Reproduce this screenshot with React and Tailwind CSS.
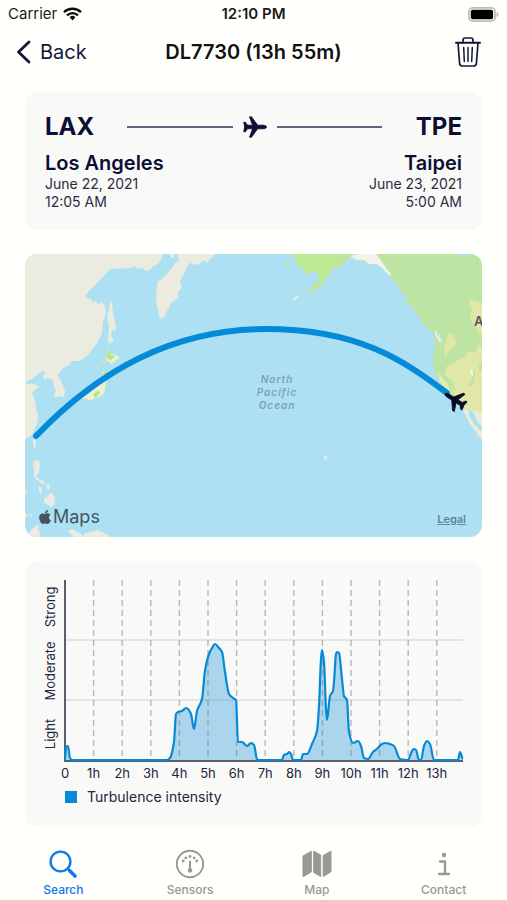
import React, { useState } from "react";
import { FaApple } from "react-icons/fa";

const airports = {
  from: { code: "LAX", city: "Los Angeles", date: "June 22, 2021", time: "12:05 AM" },
  to: { code: "TPE", city: "Taipei", date: "June 23, 2021", time: "5:00 AM" },
};

// [offset, intensity] samples, 398 wide by 180 high
const samples = [
  [0, 0], [1, 13], [3, 14], [5, 2], [7, 0], [102, 0], [105, 2], [109, 18], [111, 46], [113, 48],
  [117, 49], [121, 52], [123, 51], [126, 46], [129, 31], [132, 49], [137, 61], [140, 89], [144, 106], [147, 112],
  [150, 116], [154, 112], [157, 108], [160, 88], [164, 66], [168, 62], [171, 60], [173, 18], [177, 18], [182, 14],
  [186, 17], [189, 15], [192, 1], [194, 0], [217, 0], [219, 5], [222, 6], [224, 8], [226, 6], [228, 0],
  [236, 0], [238, 6], [242, 6], [247, 16], [252, 29], [254, 54], [256, 101], [257, 110], [259, 98], [261, 51],
  [262, 40], [265, 64], [268, 69], [269, 78], [271, 106], [272, 108], [274, 107], [277, 81], [279, 64], [282, 60],
  [284, 28], [288, 17], [293, 19], [296, 14], [299, 2], [303, 1], [308, 8], [312, 11], [317, 16], [320, 17],
  [325, 16], [329, 14], [335, 1], [343, 0], [347, 9], [349, 11], [351, 10], [354, 0], [356, 0], [359, 14],
  [362, 19], [365, 16], [369, 0], [393, 0], [395, 8], [398, 1],
];

const hours = ["0", "1h", "2h", "3h", "4h", "5h", "6h", "7h", "8h", "9h", "10h", "11h", "12h", "13h"];
const HOUR = 28.6;
const LEFT = 40;
const BASE = 199;

// Monotone cubic through the samples
const buildLine = (points) => {
  const pts = points.map(([x, v]) => [LEFT + x, BASE - v]);
  const slope = pts.slice(1).map(([x, y], i) => (y - pts[i][1]) / (x - pts[i][0]));
  const tangent = pts.map((_, i) => {
    const a = slope[i - 1];
    const b = slope[i];
    if (a === undefined || b === undefined || a * b <= 0) return 0;
    return (2 * a * b) / (a + b);
  });
  return pts.reduce((d, [x, y], i) => {
    if (i === 0) return `M${x},${y}`;
    const [px, py] = pts[i - 1];
    const h = (x - px) / 3;
    return `${d}C${px + h},${py + tangent[i - 1] * h} ${x - h},${y - tangent[i] * h} ${x},${y}`;
  }, "");
};

const line = buildLine(samples);

const WifiIcon = () => (
  <svg width="19" height="14" viewBox="0 0 19 14" fill="none" stroke="#0b0b0b" strokeWidth="2.3" aria-hidden="true">
    <path d="M1 5.2C5.8.6 13.2.6 18 5.2" />
    <path d="M4 8.4c3.2-3 7.8-3 11 0" />
    <path d="M6.600 10.3a4.1 4.1 0 0 1 5.8 0L9.500 13.4Z" fill="#0b0b0b" stroke="none" />
  </svg>
);

const BatteryIcon = () => (
  <svg width="31" height="15" viewBox="0 0 31 15" aria-hidden="true">
    <rect x=".9" y=".9" width="26.2" height="13.2" rx="4" fill="#fffffb" stroke="#bdbdb9" strokeWidth="1.8" />
    <rect x="2.8" y="2.8" width="22.3" height="9.4" rx="2" fill="#000" />
    <path d="M28.5 5c2.3.8 2.3 4.2 0 5Z" fill="#b5b5b1" />
  </svg>
);

const PlaneIcon = (props) => (
  <svg width="24" height="22" viewBox="0 0 24 22" fill="currentColor" stroke="currentColor" strokeWidth=".8" strokeLinejoin="round" aria-hidden="true" {...props}>
    <path d="M23.500 11C23.500 12 22 12.800 20 12.800H14.700L8.500 21.200H6.500L9.600 12.800H4.600L2.400 15.800H.7L1.600 11 .7 6.200H2.400L4.600 9.200H9.600L6.500.8H8.500L14.700 9.200H20C22 9.200 23.500 10 23.500 11Z" />
  </svg>
);

const TrashIcon = () => (
  <svg width="26" height="30" viewBox="0 0 26 30" fill="none" stroke="#14163d" strokeWidth="1.7" strokeLinecap="round" strokeLinejoin="round" aria-hidden="true">
    <path d="M1 5.8h24" strokeWidth="2" />
    <path d="M8 5.5V3.2Q8 1 10.2 1h5.6Q18 1 18 3.2v2.3" />
    <path d="M3 6l1.6 20.3Q4.9 29 7.5 29h11q2.6 0 2.9-2.7L23 6" />
    <path d="M8.7 10.5l.6 14M13 10.5v14M17.3 10.5l-.6 14" strokeWidth="1.5" />
  </svg>
);

const SearchIcon = () => (
  <svg width="28" height="28" viewBox="0 0 28 28" fill="none" stroke="currentColor" strokeLinecap="round" aria-hidden="true">
    <circle cx="11.5" cy="11.5" r="9.9" strokeWidth="2.4" />
    <path d="M19 19l1.5 1.5" strokeWidth="2.5" />
    <path d="M21 21l5 5" strokeWidth="3.6" />
  </svg>
);

const SensorsIcon = () => (
  <svg width="30" height="30" viewBox="0 0 30 30" fill="currentColor" aria-hidden="true">
    <circle cx="15" cy="15" r="13.2" fill="none" stroke="currentColor" strokeWidth="1.9" />
    <circle cx="8.2" cy="12" r="1.4" />
    <circle cx="10.8" cy="8.9" r="1.4" />
    <circle cx="15" cy="7.5" r="1.4" />
    <circle cx="19.2" cy="8.9" r="1.4" />
    <circle cx="21.8" cy="12" r="1.4" />
    <path d="M14 12.5a1 1 0 0 1 2 0v6.8a2.3 2.3 0 1 1-2 0Z" />
  </svg>
);

const MapIcon = () => (
  <svg width="30" height="28" viewBox="0 0 30 28" fill="currentColor" stroke="currentColor" strokeWidth="1" strokeLinejoin="round" aria-hidden="true">
    <path d="M1 6l8.3-4.8v20.8L1 26.8Z" />
    <path d="M11.7 1.2L18.7 5v21.5l-7-4Z" />
    <path d="M21.2 5.5L29 1.2v20.6l-7.8 4.7Z" />
  </svg>
);

const ContactIcon = () => (
  <svg width="14" height="24" viewBox="0 0 14 24" fill="none" stroke="currentColor" strokeWidth="2.3" strokeLinecap="round" strokeLinejoin="round" aria-hidden="true">
    <circle cx="7" cy="3" r="2.2" fill="currentColor" stroke="none" />
    <path d="M3 9.5h5v12.2M2 22h10" />
  </svg>
);

const tabs = [
  { name: "Search", icon: <SearchIcon /> },
  { name: "Sensors", icon: <SensorsIcon /> },
  { name: "Map", icon: <MapIcon /> },
  { name: "Contact", icon: <ContactIcon /> },
];

const StatusBar = () => (
  <div className="grid h-7 grid-cols-3 items-center px-2 text-[15px] leading-5 text-[#1c1c1c]">
    <div className="flex items-center gap-1.5">
      <span>Carrier</span>
      <WifiIcon />
    </div>
    <span className="text-center font-semibold">12:10 PM</span>
    <div className="flex justify-end">
      <BatteryIcon />
    </div>
  </div>
);

const Airport = ({ airport, end }) => (
  <div className={end ? "text-right" : "text-left"}>
    <h3 className="text-xl leading-6 font-semibold">{airport.city}</h3>
    <p className="text-sm leading-[18px] text-[#2b2c42]">{airport.date}</p>
    <p className="text-sm leading-[18px] text-[#2b2c42]">{airport.time}</p>
  </div>
);

const FlightCard = () => (
  <section className="rounded-xl bg-[#f9faf7] px-5 py-[19px] text-[#0c0e33]">
    <div className="flex items-center justify-between">
      <h2 className="w-[82px] text-2xl leading-8 font-bold">{airports.from.code}</h2>
      <div className="flex flex-1 items-center gap-2.5">
        <span className="h-0.5 flex-1 bg-[#62647e]" />
        <PlaneIcon />
        <span className="h-0.5 flex-1 bg-[#62647e]" />
      </div>
      <h2 className="w-20 text-right text-2xl leading-8 font-bold">{airports.to.code}</h2>
    </div>
    <div className="mt-2 flex justify-between">
      <Airport airport={airports.from} />
      <Airport airport={airports.to} end />
    </div>
  </section>
);

const RouteMap = () => (
  <section className="relative overflow-hidden rounded-xl bg-[#ade0f3]">
    <svg viewBox="25 254 457 283" className="block w-full" role="img" aria-label="Flight route from Los Angeles to Taipei">
      {/* Asia */}
      <g fill="#ebecdf">
        <path d="M25 254H163L161 259 157 265 153 266 150 270 146 271 142 268 138 269 135 266 130 268 110 269 100 280 91 289 85 296 87 298 91 299 92 303 96 301 98 304 102 302 105 306 106 313 103 322 102 333 97 343 88 355 80 361 72 361 68 366 63 368 58 375 60 379 62 383 65 391 64 397 59 396 55 398 54 394 56 391 54 387 53 380 47 378 44 380 43 376 46 373 43 371 37 375 32 379 27 381 26 384 34 384 40 387 36 389 32 393 35 400 36 408 38 415 37 423 32 435 25 439Z" />
        <path d="M170 254h5l-2 4h-2Z" />
        <path d="M180 254H215L210 259 207 263 203 260 198 265 190 263 187 267 184 274 182 277 180 282 182 288 178 292 178 298 172 302 168 309 165 315 162 319 159 317 158 310 156 300 157 286 158 282 164 277 170 270 176 262 180 260 177 256Z" />
        <path d="M110 300L112 304 113 313 116 328 115 331 112 330 111 336 114 341 110 344 108 341 109 325 107 317 109 310Z" />
        <path d="M33 439l3 1 0 5-2 4-1-5Z" />
        <path d="M33 461l5-1 2 4-1 8-3 4 4 4 4 1 1 4-4-2-7-6 0-6Z" />
        <path d="M39 486l3 2-1 7-2-3ZM47 483l3 3-1 4-3-2ZM44 499l4-3 3-4 4 5-1 8-3 2-4-3-3-1ZM25 491l3-3-3 7ZM25 512l3 3-3 3ZM28 534l4-5 7-5-1 6 3 3-2 4H27ZM68 531l4-2 6 3 6 5H74ZM83 534l8-2 6-2 7 3 7 4H85ZM29 514l4 1-2 2Z" />
        <path d="M324 457l2-2 1 3-2 2Z" fill="#f4f4dc" />
      </g>
      {/* Japan */}
      <path d="M108 349L111 354 116 355 120 358 115 361 112 364 107 361 106 356ZM102 362l3-3-1 6ZM102 371l5 0 1 5-2 6-1 8-2 5-8 3-5 3-3-2-12-1 3-3 10 0 9-9 6-8Z" fill="#ecf0cf" />
      <path d="M108 350l3 5 4 1-4 4-3-1-2-3ZM101 365l2-5 1 6ZM103 372l4-1 1 4-4 3ZM93 395l5-5 2 3-5 5ZM72 399l4-4 4 0-3 5Z" fill="#b7e487" />
      {/* North America */}
      <path d="M290 254H482V440L476 432 470 424 463 411 456 400 446 390 440 381 434 372 433 358 435 345 433 333 427 328 421 320 415 311 408 302 403 292 396 284 388 274 380 264 370 264 358 261 350 257 343 265 338 269 335 266 330 273 326 278 322 286 317 288 313 292 309 292 311 287 320 278 323 271 317 274 315 269 309 274 302 273 303 267 296 266 296 259Z" fill="#bde4a2" />
      <path d="M290 254H345L340 263 332 269 324 280 318 277 316 271 305 273 303 267 297 266 296 259ZM284 263l5-2 2 2-5 2ZM302 292l4-1 0 2-3 1ZM330 282l5-2-2 3Z" fill="#bde995" />
      <path d="M292 299l5-3 2 1-5 3Z" fill="#f0f1d2" />
      <path d="M356 260L350 256 358 254H376L382 262 386 268 391 274 390 276 383 269 377 264 369 264 364 260Z" fill="#f2f3ef" />
      <path d="M392 277l4 3-1 3ZM399 284l4 6-2 3ZM405 291l4 8-3 0ZM403 303l4-1 1 3-3 1Z" fill="#bde4a2" />
      <path d="M468 299L482 303V335L475 328 470 318 472 310ZM447 337L450 332 457 340 455 346 449 351 445 357 444 350ZM447 366L456 361 464 358 469 351 476 353 479 344 482 348V413L472 412 462 406 454 395 450 382 445 374Z" fill="#e1e8a7" />
      <path d="M439 373l8 10 6 12-8-6-6-9Z" fill="#e3edae" />
      <path d="M453 389l-5-11 3 0 5 13ZM468 384l4-4 0-8 3-2-1 12-4 5ZM479 364l3-3v9l-3 2Z" fill="#bde4a2" />
      <path d="M462 408L482 413V440L476 432 470 424Z" fill="#ebecdf" />
      <path d="M468 409l5 3 4 9 5 6v5l-8-8-5-8Z" fill="#ade0f3" />
      <path d="M470 370l3 1 0 5-2-1ZM435 330l4 4 3 9-3-2-4-7Z" fill="#f3f4ef" />
      <path d="M436 330l2 2 2 7-3-4ZM459 254h10l-3 3h-5Z" fill="#ade0f3" />
      <path d="M36 436C96 373 170 329 265 329S404 361 447 393" fill="none" stroke="#058ad8" strokeWidth="6" strokeLinecap="round" />
      <g transform="translate(455 400) rotate(212)" color="#0a0b2a">
        <PlaneIcon x="-12" y="-11" />
      </g>
      <g fontFamily="Inter, sans-serif" fontSize="10" fontWeight="600" fontStyle="italic" letterSpacing="1" textAnchor="middle" fill="#7ba0b3">
        <text x="277" y="383">North</text>
        <text x="277" y="396">Pacific</text>
        <text x="277" y="409">Ocean</text>
      </g>
      <text x="474" y="326" fontFamily="Inter, sans-serif" fontSize="13" fontWeight="600" fill="#505a63">A</text>
    </svg>
    <div className="absolute bottom-2 left-3 flex items-center text-lg leading-6 text-[#45555f]">
      <FaApple className="size-4" />
      <span>Maps</span>
    </div>
    <a href="#legal" className="absolute right-4 bottom-2.5 text-[11px] leading-4 font-semibold text-[#648597] underline">
      Legal
    </a>
  </section>
);

const TurbulenceChart = () => (
  <section className="rounded-xl bg-[#f9faf7] pb-5 text-[#23253d]">
    <svg viewBox="0 0 457 220" className="block w-full" fontFamily="Inter, sans-serif" fontSize="13" fill="#23253d" role="img" aria-label="Turbulence intensity by hour">
      <path d="M40 79H438M40 139H438" stroke="#cfd0cd" />
      <path d={`${line}L438,${BASE}H40Z`} fill="#058ad8" fillOpacity=".32" />
      {hours.slice(1).map((hour, index) => (
        <line
          key={hour}
          x1={LEFT + (index + 1) * HOUR}
          x2={LEFT + (index + 1) * HOUR}
          y1="19"
          y2={BASE}
          stroke="#777"
          strokeOpacity=".5"
          strokeWidth="1.4"
          strokeDasharray="6 4"
        />
      ))}
      <path d="M40 19V200H438" fill="none" stroke="#2a2c40" strokeWidth="1.5" />
      <path d={line} fill="none" stroke="#058ad8" strokeWidth="2.2" strokeLinejoin="round" />
      <g textAnchor="middle">
        {hours.map((hour, index) => (
          <text key={hour} x={LEFT + index * HOUR} y="217">{hour}</text>
        ))}
        <text transform="translate(30 173) rotate(-90)">Light</text>
        <text transform="translate(30 110) rotate(-90)">Moderate</text>
        <text transform="translate(30 46) rotate(-90)">Strong</text>
      </g>
    </svg>
    <div className="mt-1.5 flex items-center gap-2.5 pl-10 text-sm leading-5">
      <span className="size-3 bg-[#058ad8]" />
      <span>Turbulence intensity</span>
    </div>
  </section>
);

const App = () => {
  const [active, setActive] = useState("Search");

  return (
    <div className="flex min-h-screen flex-col bg-[#fffffb] font-['Inter',sans-serif]">
      <StatusBar />

      <header className="grid h-12 grid-cols-[1fr_auto_1fr] items-center px-4 text-xl">
        <button type="button" className="flex items-center gap-2 text-[#14163d]">
          <svg width="16" height="24" viewBox="0 0 16 24" fill="none" stroke="#14163d" strokeWidth="2.8" strokeLinecap="round" strokeLinejoin="round" aria-hidden="true">
            <path d="M13 2L2.5 12 13 22" />
          </svg>
          <span>Back</span>
        </button>
        <h1 className="font-semibold text-[#111]">DL7730 (13h 55m)</h1>
        <button type="button" aria-label="Delete flight" className="justify-self-end px-2.5">
          <TrashIcon />
        </button>
      </header>

      <main className="flex flex-1 flex-col gap-6 px-[25px] pt-4">
        <FlightCard />
        <RouteMap />
        <TurbulenceChart />
      </main>

      <nav className="grid grid-cols-4 pt-5">
        {tabs.map((tab) => (
          <button
            key={tab.name}
            type="button"
            onClick={() => setActive(tab.name)}
            className={`flex flex-col items-center text-xs leading-5 font-medium ${active === tab.name ? "text-[#1477ee]" : "text-[#989896]"}`}
          >
            <span className="flex h-8 items-center">{tab.icon}</span>
            <span>{tab.name}</span>
          </button>
        ))}
      </nav>
    </div>
  );
};

export default App;
